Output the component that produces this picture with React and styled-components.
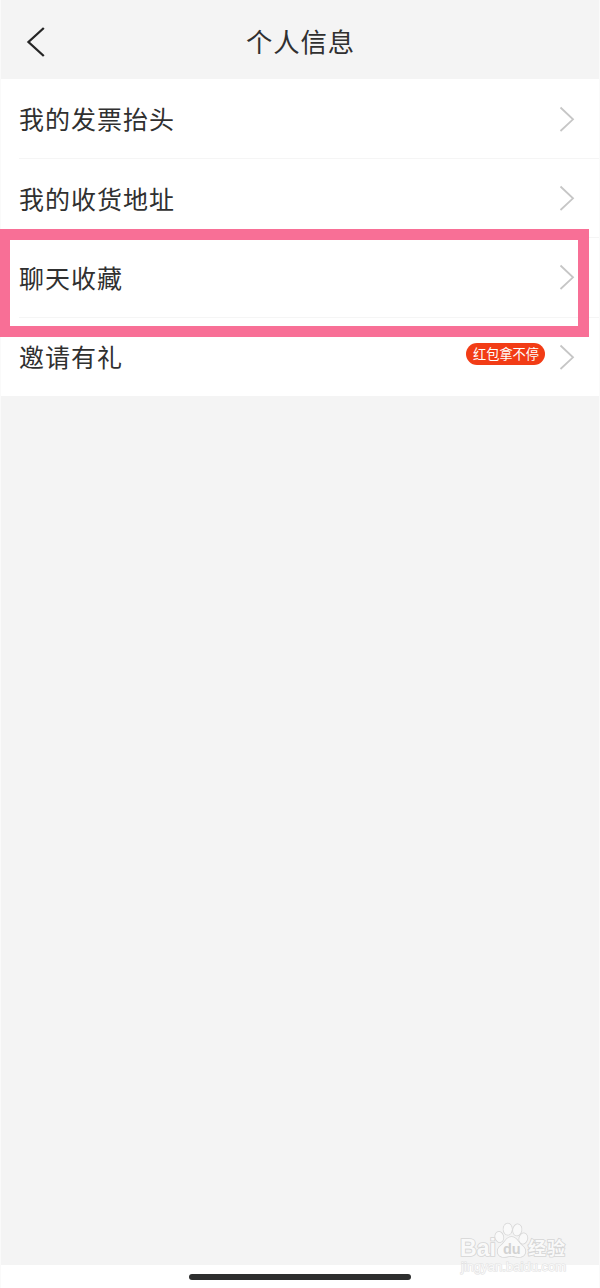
import React from 'react'
import styled, { createGlobalStyle } from 'styled-components'

const GlobalStyle = createGlobalStyle`
    * { box-sizing: border-box }
    body {
        margin: 0;
        background-color: #ffffff;
        font-family: "Noto Sans CJK SC", sans-serif;
        color: #303030;
    }
`

const Screen = styled.div`
    position: relative;
    display: flex;
    flex-direction: column;
    width: 600px;
    height: 1288px;
    border-left: 1px solid #fafafa;
    border-right: 1px solid #fafafa;
`

const Header = styled.header`
    display: grid;
    grid-template-columns: 100px 1fr 100px;
    align-items: center;
    height: 79px;
    background-color: #f4f4f4;
`

const BackButton = styled.button`
    display: flex;
    width: 50px;
    height: 50px;
    margin: 5px 0 0 10px;
    padding: 9px 14px;
    border: none;
    background: none;
`

const Title = styled.h1`
    margin: 3px 0 0 1px;
    font-size: 26.4px;
    font-weight: 400;
    line-height: 40px;
    letter-spacing: 0.8px;
    text-align: center;
`

const List = styled.ul`
    margin: 0;
    padding: 0;
    list-style: none;
    background-color: #ffffff;
`

const Row = styled.li`
    position: relative;
    display: flex;
    align-items: center;
    height: 79.2px;
    margin-left: 18px;
    padding-right: 24px;
    border-top: 1px solid #f5f5f5;
    &:first-child { border-top-color: transparent }
`

const Label = styled.span`
    flex: 1;
    margin-top: -1.4px;
    font-size: 25px;
    line-height: 36px;
    letter-spacing: 1px;
`

const Badge = styled.span`
    height: 22px;
    margin: -5px 14px 0 0;
    padding: 0 6px 0 7px;
    border-radius: 11px;
    background-color: #f23c16;
    color: #ffffff;
    font-size: 13.2px;
    line-height: 21px;
`

const Highlight = styled.div`
    position: absolute;
    z-index: 1;
    top: -9px;
    left: -20px;
    width: 590px;
    height: 108px;
    border: 11px solid #f86f96;
    pointer-events: none;
`

const Content = styled.main`
    flex: 1;
    background-color: #f4f4f4;
`

const HomeArea = styled.footer`
    display: flex;
    justify-content: center;
    height: 23px;
    padding-top: 9px;
    background-color: #ffffff;
`

const HomeBar = styled.div`
    width: 222px;
    height: 6px;
    border-radius: 3px;
    background-color: #2d2e2e;
`

const Watermark = styled.div`
    position: absolute;
    right: 28px;
    bottom: 12px;
    width: 114px;
    height: 56px;
`

const BackIcon = () => (
    <svg width="22" height="32" viewBox="0 0 22 32" fill="none" stroke="#252525" strokeWidth="2.3">
        <path d="M18.8 2 L3.5 16 L18.8 30" />
    </svg>
)

const Chevron = () => (
    <svg width="16" height="26" viewBox="0 0 16 26" fill="none" stroke="#c6c6c6" strokeWidth="1.8">
        <path d="M1.5 1.5 L14 13.3 L1.5 25" />
    </svg>
)

// Baidu Jingyan mark: wordmark around the paw, site address below
const BaiduMark = () => (
    <svg width="114" height="56" viewBox="0 0 114 56" fill="#f9f9f9" stroke="#d6d6d6" strokeWidth="1.7" paintOrder="stroke">
        <text x="3" y="35.5" fontFamily="Liberation Sans, sans-serif" fontSize="23" fontWeight="700" textLength="36" lengthAdjust="spacingAndGlyphs">Bai</text>
        <g strokeWidth="1.5">
            <ellipse cx="42.3" cy="17" rx="4" ry="5.2" transform="rotate(-15 42.3 17)" />
            <ellipse cx="50.7" cy="9.2" rx="4.2" ry="5.6" />
            <ellipse cx="60.3" cy="9.9" rx="4.2" ry="5.6" transform="rotate(12 60.3 9.9)" />
            <ellipse cx="66.3" cy="18.5" rx="4" ry="5.2" transform="rotate(15 66.3 18.5)" />
            <path d="M54.5 17 C49 17 48 22.5 44 25.5 C38.5 29.5 40 37 47 37 C51 37 51 36 54.5 36 C58 36 58 37 62 37 C69 37 70.5 29.5 65 25.5 C61 22.5 60 17 54.5 17 Z" />
        </g>
        <text x="46" y="33.5" fontFamily="Liberation Sans, sans-serif" fontSize="14.5" fontWeight="700" fill="#d2d2d2" stroke="none" textLength="17.5">du</text>
        <text x="71" y="34.5" fontFamily="Noto Sans CJK SC, sans-serif" fontSize="18" fontWeight="700" strokeWidth="1.7" textLength="37">经验</text>
        <text x="4" y="51" fontFamily="Liberation Sans, sans-serif" fontSize="12.5" stroke="#e2e2e2" strokeWidth="1.2" textLength="105" lengthAdjust="spacingAndGlyphs">jingyan.baidu.com</text>
    </svg>
)

const items = [
    { label: '我的发票抬头' },
    { label: '我的收货地址' },
    { label: '聊天收藏', highlighted: true },
    { label: '邀请有礼', badge: '红包拿不停' },
]

const App = () => (
    <Screen>
        <GlobalStyle />
        <Header>
            <BackButton aria-label="返回"><BackIcon /></BackButton>
            <Title>个人信息</Title>
        </Header>
        <List>
            {items.map(({ label, badge, highlighted }) => (
                <Row key={label}>
                    <Label>{label}</Label>
                    {badge && <Badge>{badge}</Badge>}
                    <Chevron />
                    {highlighted && <Highlight />}
                </Row>
            ))}
        </List>
        <Content />
        <HomeArea><HomeBar /></HomeArea>
        <Watermark><BaiduMark /></Watermark>
    </Screen>
)

export default App
